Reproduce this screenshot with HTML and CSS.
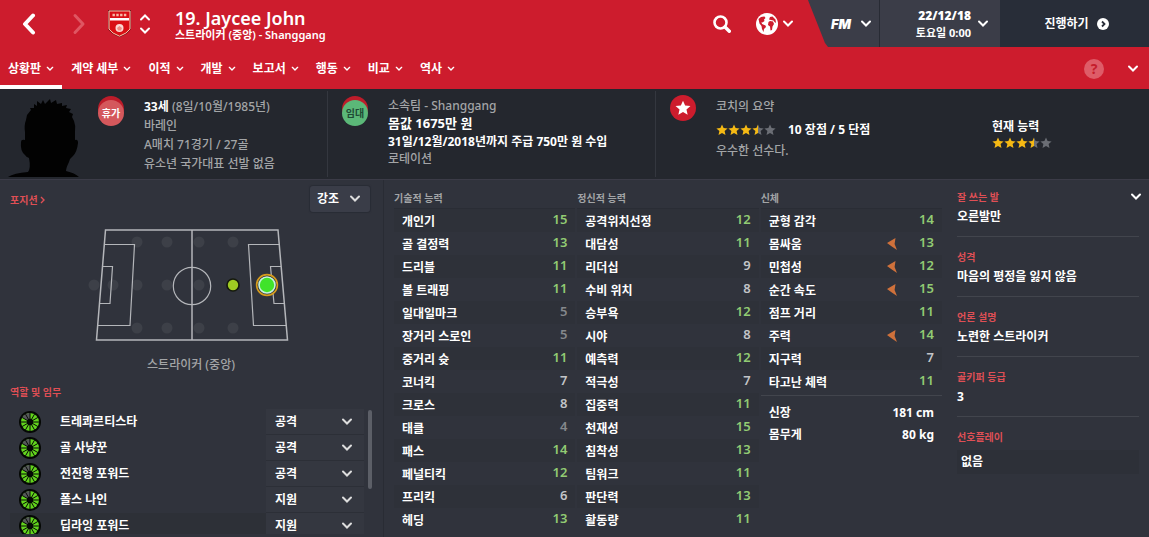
FILE: index.html
```
<!DOCTYPE html>
<html lang="ko">
<head>
    <meta charset="UTF-8">
    <meta name="viewport" content="width=device-width, initial-scale=1.0">
    <title>Jaycee John</title>
    <link rel="stylesheet" href="styles.css">
</head>
<body>
    <svg class="defs" aria-hidden="true">
        <linearGradient id="mitad"><stop offset="50%" stop-color="#f5b914"/><stop offset="50%" stop-color="#6b6e75"/></linearGradient>
        <symbol id="down" viewBox="0 0 12 8"><path d="M2 1.5 L6 5.5 L10 1.5" fill="none" stroke="currentColor" stroke-width="2" stroke-linecap="round"/></symbol>
        <symbol id="star" viewBox="0 0 12 12"><path d="M6 .5 L7.6 4.1 L11.6 4.5 L8.6 7.1 L9.5 11 L6 9 L2.5 11 L3.4 7.1 L.4 4.5 L4.4 4.1Z"/></symbol>
        <symbol id="stars" viewBox="0 0 60 12">
            <g fill="#f5b914"><use href="#star" width="12" height="12"/><use href="#star" x="12" width="12" height="12"/><use href="#star" x="24" width="12" height="12"/></g>
            <use href="#star" x="36" width="12" height="12" fill="url(#mitad)"/>
            <use href="#star" x="48" width="12" height="12" fill="#6b6e75"/>
        </symbol>
        <symbol id="wheel" viewBox="0 0 22 22">
            <circle cx="11" cy="11" r="11" fill="#050805"/>
            <circle cx="11" cy="11" r="9" fill="#62d31d"/>
            <path d="M11 11 V2 A9 9 0 0 0 3.2 6.5Z" fill="#56595a"/>
            <path d="M11 2 V20 M2 11 H20 M6.5 3.2 L15.5 18.8 M15.5 3.2 L6.5 18.8 M3.2 6.5 L18.8 15.5 M18.8 6.5 L3.2 15.5" stroke="#050805" stroke-width="1"/>
            <circle cx="11" cy="11" r="3.2" fill="#050805"/>
        </symbol>
        <symbol id="arrow" viewBox="0 0 10 12"><path d="M0 5 L8.5 0 L7.6 6 L10 12 L4.8 8.4Z" fill="#cf713b"/></symbol>
    </svg>

    <div class="screen">
        <header>
            <div class="topbar">
                <button class="icon back" aria-label="뒤로"><svg width="14" height="22" viewBox="0 0 14 22"><path d="M11 2.5 L3 11 L11 19.5" fill="none" stroke="currentColor" stroke-width="4" stroke-linecap="round" stroke-linejoin="round"/></svg></button>
                <button class="icon forward" aria-label="앞으로"><svg width="14" height="22" viewBox="0 0 14 22"><path d="M3 2.5 L11 11 L3 19.5" fill="none" stroke="currentColor" stroke-width="3" stroke-linecap="round" stroke-linejoin="round"/></svg></button>
                <svg class="crest" width="25" height="29" viewBox="0 0 25 29">
                    <path d="M1 1 H24 V20 Q21 25 12.5 28.2 Q4 25 1 20Z" fill="#7c1418"/>
                    <path d="M2 2 H23 V20 Q20 24.5 12.5 27.2 Q5 24.5 2 20Z" fill="#d90f14" stroke="#f6c5ae" stroke-width="1"/>
                    <path d="M3 9 H22 V11.5 H3Z" fill="#fff"/>
                    <path d="M5.5 6 H19.5" stroke="#f7b9a5" stroke-width="2.4" stroke-dasharray="2.4 1.4"/>
                    <circle cx="12.5" cy="19" r="4" fill="#fbd8d2"/>
                    <path d="M10 19 L12.5 17 L15 19 L14 21.5 H11Z" fill="#ef8d84"/>
                </svg>
                <div class="updown">
                    <button class="icon" aria-label="이전 선수"><svg class="flip" width="12" height="8"><use href="#down"/></svg></button>
                    <button class="icon" aria-label="다음 선수"><svg width="12" height="8"><use href="#down"/></svg></button>
                </div>
                <div class="player">
                    <h1>19. Jaycee John</h1>
                    <p>스트라이커 (중앙) - Shanggang</p>
                </div>
                <button class="icon search" aria-label="검색"><svg width="18" height="18" viewBox="0 0 18 18"><circle cx="7.5" cy="7.5" r="6" fill="none" stroke="currentColor" stroke-width="2.6"/><path d="M12 12 L16.3 16.3" stroke="currentColor" stroke-width="3.4" stroke-linecap="round"/></svg></button>
                <button class="icon world" aria-label="세계">
                    <svg width="22" height="22" viewBox="0 0 22 22"><circle cx="11" cy="11" r="11" fill="#fff"/><path d="M2.5 6 L5 4 L8.5 3.5 L9.5 5 L8 6.5 L8.5 8 L6.5 9.5 L5.5 9 L6 11 L9.5 12.5 L10 14 L8 16 L7.5 19 L6 16 L5.5 13 L3.5 10.5Z M12.5 9 L14 8 L17 8.5 L18 11 L16.5 13.5 L16 17 L14.5 17.5 L14 13.5 L12 12Z M13 6.5 L14 4 L16.5 3.5 L19.5 6.5 L20 10 L18.5 9 L17.5 7.5 L15 7Z" fill="#cd1c2d"/></svg>
                    <svg width="12" height="8"><use href="#down"/></svg>
                </button>
                <div class="tools">
                    <button class="fm"><span>FM</span><svg width="12" height="8"><use href="#down"/></svg></button>
                    <button class="date"><span><b>22/12/18</b><small>토요일 0:00</small></span><svg width="12" height="8"><use href="#down"/></svg></button>
                    <button class="continue"><span>진행하기</span><svg width="12" height="12" viewBox="0 0 12 12"><circle cx="6" cy="6" r="6" fill="#fff"/><path d="M5 3.5 L7.5 6 L5 8.5" fill="none" stroke="#282d38" stroke-width="1.8"/></svg></button>
                </div>
            </div>
            <nav>
                <button class="active">상황판<svg width="8" height="6"><use href="#down"/></svg></button>
                <button>계약 세부<svg width="8" height="6"><use href="#down"/></svg></button>
                <button>이적<svg width="8" height="6"><use href="#down"/></svg></button>
                <button>개발<svg width="8" height="6"><use href="#down"/></svg></button>
                <button>보고서<svg width="8" height="6"><use href="#down"/></svg></button>
                <button>행동<svg width="8" height="6"><use href="#down"/></svg></button>
                <button>비교<svg width="8" height="6"><use href="#down"/></svg></button>
                <button>역사<svg width="8" height="6"><use href="#down"/></svg></button>
                <button class="help">?</button>
                <button class="icon more" aria-label="더 보기"><svg width="12" height="8"><use href="#down"/></svg></button>
            </nav>
        </header>

        <section class="summary">
            <div class="card bio">
                <svg class="photo" width="80" height="82" viewBox="0 0 80 82"><path d="M8 82 Q14 78 28 77 Q31 73 29 63 Q26 62 25 60 Q20 56 21 47 Q21 44 25 45 L25 37 Q24 30 26 25 L27 20 L31 15 L30 13 L34 13 L34 9 L37 11 L37 6 L41 9 L43 5 L45 9 L50 4 L51 8 L56 5 L57 9 L62 8 L62 11 L67 10 L66 13 L71 14 L69 17 L73 19 L72 22 L74 26 Q76 31 75 37 L75 45 Q78 44 78 48 Q77 57 73 61 Q70 63 69 67 Q66 73 66 76 Q75 78 79 82Z" fill="#020202"/></svg>
                <span class="badge holiday">휴가</span>
                <div class="lines">
                    <p><b>33세</b> (8일/10월/1985년)</p>
                    <p>바레인</p>
                    <p>A매치 71경기 / 27골</p>
                    <p>유소년 국가대표 선발 없음</p>
                </div>
            </div>
            <div class="card contract">
                <span class="badge loan">임대</span>
                <div class="lines">
                    <p>소속팀 - Shanggang</p>
                    <p class="price">몸값 1675만 원</p>
                    <p><b>31일/12월/2018년까지 주급 750만 원 수입</b></p>
                    <p>로테이션</p>
                </div>
            </div>
            <div class="card coach">
                <span class="badge scout"><svg width="16" height="16"><use href="#star"/></svg></span>
                <div class="lines">
                    <p>코치의 요약</p>
                    <p class="rating"><svg width="60" height="12"><use href="#stars"/></svg><b>10 장점 / 5 단점</b></p>
                    <p>우수한 선수다.</p>
                </div>
                <div class="ability">
                    <b>현재 능력</b>
                    <svg width="60" height="12"><use href="#stars"/></svg>
                </div>
            </div>
        </section>

        <main>
            <section class="positions">
                <div class="head">
                    <a href="#">포지션 <svg width="5" height="8" viewBox="0 0 5 8"><path d="M1 1 L4 4 L1 7" fill="none" stroke="currentColor" stroke-width="1.4"/></svg></a>
                    <select class="highlight" aria-label="강조"><option>강조</option></select>
                </div>
                <svg class="pitch" width="210" height="120" viewBox="0 0 210 120">
                    <g fill="#3d4048">
                        <circle cx="51" cy="17" r="5.5"/><circle cx="81" cy="17" r="5.5"/><circle cx="113" cy="17" r="5.5"/><circle cx="147" cy="17" r="5.5"/>
                        <circle cx="8" cy="60" r="5.5"/><circle cx="27" cy="60" r="5.5"/><circle cx="51" cy="60" r="5.5"/><circle cx="81" cy="60" r="5.5"/><circle cx="113" cy="60" r="5.5"/>
                        <circle cx="51" cy="103" r="5.5"/><circle cx="81" cy="103" r="5.5"/><circle cx="113" cy="103" r="5.5"/><circle cx="147" cy="103" r="5.5"/>
                    </g>
                    <g fill="none" stroke="#b4b6ba" stroke-width="1.2">
                        <path d="M19.5 5 H192 L201.5 115 H10.5Z" stroke-width="1.5"/>
                        <path d="M106 5 V115" stroke-width="1.5"/>
                        <path d="M18 19.5 H48.5 L44 100.5 H11"/>
                        <path d="M16 41.5 H26.5 L24 78.5 H13"/>
                        <path d="M193 19.5 H162.5 L167.5 100.5 H200"/>
                        <path d="M195 41.5 H184.5 L188 78.5 H198"/>
                        <circle cx="106" cy="61" r="18.7"/>
                    </g>
                    <circle cx="147" cy="60" r="6" fill="#9fcb22" stroke="#15190d" stroke-width="1.6"/>
                    <circle cx="181" cy="60" r="10.4" fill="#30333c" stroke="#d79d1d" stroke-width="1.6"/>
                    <circle cx="181" cy="60" r="8" fill="#40e32a" stroke="#c8f3dc" stroke-width="1.6"/>
                </svg>
                <p class="caption">스트라이커 (중앙)</p>
                <h2>역할 및 임무</h2>
                <div class="roles">
                    <ul>
                        <li><svg width="22" height="22"><use href="#wheel"/></svg><label for="rol1">트레콰르티스타</label><select id="rol1"><option>공격</option></select></li>
                        <li><svg width="22" height="22"><use href="#wheel"/></svg><label for="rol2">골 사냥꾼</label><select id="rol2"><option>공격</option></select></li>
                        <li><svg width="22" height="22"><use href="#wheel"/></svg><label for="rol3">전진형 포워드</label><select id="rol3"><option>공격</option></select></li>
                        <li><svg width="22" height="22"><use href="#wheel"/></svg><label for="rol4">폴스 나인</label><select id="rol4"><option>지원</option></select></li>
                        <li class="shade"><svg width="22" height="22"><use href="#wheel"/></svg><label for="rol5">딥라잉 포워드</label><select id="rol5"><option>지원</option></select></li>
                    </ul>
                    <div class="scrollbar"></div>
                </div>
            </section>

            <section class="attributes">
                <table>
                    <thead><tr><th colspan="2">기술적 능력</th></tr></thead>
                    <tbody>
                        <tr><td>개인기</td><td class="good">15</td></tr>
                        <tr><td>골 결정력</td><td class="good">13</td></tr>
                        <tr><td>드리블</td><td class="good">11</td></tr>
                        <tr><td>볼 트래핑</td><td class="good">11</td></tr>
                        <tr><td>일대일마크</td><td class="low">5</td></tr>
                        <tr><td>장거리 스로인</td><td class="low">5</td></tr>
                        <tr><td>중거리 슛</td><td class="good">11</td></tr>
                        <tr><td>코너킥</td><td>7</td></tr>
                        <tr><td>크로스</td><td>8</td></tr>
                        <tr><td>태클</td><td class="low">4</td></tr>
                        <tr><td>패스</td><td class="good">14</td></tr>
                        <tr><td>페널티킥</td><td class="good">12</td></tr>
                        <tr><td>프리킥</td><td>6</td></tr>
                        <tr><td>헤딩</td><td class="good">13</td></tr>
                    </tbody>
                </table>
                <table>
                    <thead><tr><th colspan="2">정신적 능력</th></tr></thead>
                    <tbody>
                        <tr><td>공격위치선정</td><td class="good">12</td></tr>
                        <tr><td>대담성</td><td class="good">11</td></tr>
                        <tr><td>리더십</td><td>9</td></tr>
                        <tr><td>수비 위치</td><td>8</td></tr>
                        <tr><td>승부욕</td><td class="good">12</td></tr>
                        <tr><td>시야</td><td>8</td></tr>
                        <tr><td>예측력</td><td class="good">12</td></tr>
                        <tr><td>적극성</td><td>7</td></tr>
                        <tr><td>집중력</td><td class="good">11</td></tr>
                        <tr><td>천재성</td><td class="good">15</td></tr>
                        <tr><td>침착성</td><td class="good">13</td></tr>
                        <tr><td>팀워크</td><td class="good">11</td></tr>
                        <tr><td>판단력</td><td class="good">13</td></tr>
                        <tr><td>활동량</td><td class="good">11</td></tr>
                    </tbody>
                </table>
                <div class="physical">
                    <table>
                        <thead><tr><th colspan="2">신체</th></tr></thead>
                        <tbody>
                            <tr><td>균형 감각</td><td class="good">14</td></tr>
                            <tr><td>몸싸움</td><td class="good"><svg width="10" height="12"><use href="#arrow"/></svg>13</td></tr>
                            <tr><td>민첩성</td><td class="good"><svg width="10" height="12"><use href="#arrow"/></svg>12</td></tr>
                            <tr><td>순간 속도</td><td class="good"><svg width="10" height="12"><use href="#arrow"/></svg>15</td></tr>
                            <tr><td>점프 거리</td><td class="good">11</td></tr>
                            <tr><td>주력</td><td class="good"><svg width="10" height="12"><use href="#arrow"/></svg>14</td></tr>
                            <tr><td>지구력</td><td>7</td></tr>
                            <tr><td>타고난 체력</td><td class="good">11</td></tr>
                        </tbody>
                    </table>
                    <dl>
                        <div><dt>신장</dt><dd>181 cm</dd></div>
                        <div><dt>몸무게</dt><dd>80 kg</dd></div>
                    </dl>
                </div>
            </section>

            <aside>
                <div class="fact">
                    <div class="fact-head"><h3>잘 쓰는 발</h3><button class="icon" aria-label="열기"><svg width="12" height="8"><use href="#down"/></svg></button></div>
                    <p>오른발만</p>
                </div>
                <div class="fact"><h3>성격</h3><p>마음의 평정을 잃지 않음</p></div>
                <div class="fact"><h3>언론 설명</h3><p>노련한 스트라이커</p></div>
                <div class="fact"><h3>골키퍼 등급</h3><p>3</p></div>
                <div class="fact"><h3>선호플레이</h3><p class="box">없음</p></div>
            </aside>
        </main>
    </div>
</body>
</html>
```

FILE: styles.css
```
* {
    box-sizing: border-box;
}
body {
    margin: 0;
    background-color: #30333c;
    color: #fff;
    font-family: "Noto Sans", "Noto Sans CJK KR", sans-serif;
    font-size: 12px;
    line-height: 20px;
}
h1, h2, h3, p, ul, dl, dd {
    margin: 0;
    padding: 0;
}
svg {
    display: block;
    flex: none;
}
.defs {
    position: absolute;
    width: 0;
    height: 0;
}
button, select {
    font: inherit;
    color: inherit;
    background: none;
    border: none;
    padding: 0;
    cursor: pointer;
}
select {
    appearance: none;
    font-weight: 700;
    background: #343740 url("data:image/svg+xml,%3Csvg xmlns='http://www.w3.org/2000/svg' viewBox='0 0 12 8'%3E%3Cpath d='M2 1.5 L6 5.5 L10 1.5' fill='none' stroke='%23dddddd' stroke-width='2' stroke-linecap='round'/%3E%3C/svg%3E") no-repeat right 11px center / 12px 8px;
}
.screen {
    display: flex;
    flex-direction: column;
    height: 100vh;
    overflow: hidden;
}

/* cabecera */
header {
    background-color: #cd1c2d;
}
.topbar {
    display: flex;
    align-items: center;
    height: 47px;
    padding-left: 22px;
}
.icon {
    display: flex;
    align-items: center;
}
.forward {
    margin-left: 36px;
    color: #df5662;
}
.crest {
    margin-left: 21px;
}
.updown {
    display: flex;
    flex-direction: column;
    gap: 6px;
    margin: 0 24px 0 7px;
}
.flip {
    transform: scaleY(-1);
}
.player {
    flex: 1;
    padding-top: 1px;
}
.player h1 {
    font-size: 18px;
    line-height: 22px;
    font-weight: 600;
}
.player p {
    font-size: 11px;
    line-height: 12px;
    font-weight: 600;
}
.world {
    gap: 4px;
    margin: 0 14px 0 25px;
}
.tools {
    display: flex;
    align-self: stretch;
    background-color: #3b3d48;
    clip-path: polygon(0 0, 100% 0, 100% 100%, 20px 100%, 17px 43px);
}
.tools button {
    display: flex;
    align-items: center;
    font-weight: 700;
}
.fm {
    gap: 9px;
    padding: 0 7px 0 23px;
    border-right: 1px solid #282b34;
}
.fm span {
    font-family: Inter, sans-serif;
    font-size: 13px;
    font-weight: 900;
    font-style: italic;
}
.date {
    justify-content: flex-end;
    gap: 6px;
    width: 120px;
    padding-right: 11px;
    text-align: right;
}
.date b, .date small {
    display: block;
    font-size: 12px;
    line-height: 17px;
}
.date small {
    font-size: 11px;
}
.tools .continue {
    justify-content: center;
    gap: 8px;
    width: 149px;
    padding-left: 4px;
    background-color: #282d38;
}
nav {
    display: flex;
    gap: 1px;
    height: 42px;
    padding-right: 10px;
}
nav button {
    display: flex;
    align-items: center;
    gap: 5px;
    padding: 6px 8px 0;
    font-weight: 700;
    border-bottom: 4px solid transparent;
}
nav .active {
    border-bottom-color: #fff;
}
nav .help {
    align-self: center;
    justify-content: center;
    width: 20px;
    height: 20px;
    margin: 2px 22px 0 auto;
    padding: 0;
    border: none;
    border-radius: 50%;
    background-color: #de5c68;
    color: #c51c2c;
    font-size: 14px;
}
nav .more {
    padding: 6px 0 0;
}

/* resumen */
.summary {
    display: grid;
    grid-template-columns: 328fr 328fr 493fr;
    padding: 2px 0;
    background-color: #24272e;
    border-bottom: 1px solid #3b3b47;
    color: #a3a5a7;
}
.summary b {
    color: #fff;
}
.card {
    display: flex;
    align-items: flex-start;
    height: 86px;
    padding-left: 14px;
}
.bio {
    padding-left: 0;
}
.bio, .contract {
    border-right: 1px solid #34373f;
}
.photo {
    align-self: flex-end;
    margin-right: 18px;
}
.badge {
    display: flex;
    align-items: center;
    justify-content: center;
    flex: none;
    width: 26px;
    height: 26px;
    margin: 9px 20px 0 0;
    border-radius: 50%;
    font-size: 10px;
    font-weight: 700;
}
.holiday {
    background-color: #d4585c;
    color: #fff;
    box-shadow: 0 -4px #bd1c2a;
}
.loan {
    background-color: #5bb878;
    color: #1f4a35;
    box-shadow: 0 -4px #bd1c2a;
}
.scout {
    margin-top: 4px;
    background-color: #cd1c2d;
    fill: #fff;
}
.lines {
    padding-top: 6px;
    font-weight: 500;
    line-height: 19px;
}
.contract .lines {
    line-height: 17px;
}
.lines .price {
    color: #fff;
    font-size: 13px;
    font-weight: 700;
    line-height: 19px;
}
.coach .lines {
    flex: 1;
    line-height: 20px;
}
.rating {
    display: flex;
    align-items: center;
    gap: 12px;
    padding: 3px 0 1px;
}
.ability {
    width: 157px;
    padding-top: 26px;
}

/* contenido */
main {
    display: grid;
    grid-template-columns: 384fr 565fr 200fr;
    flex: 1;
    min-height: 0;
}
.positions {
    display: flex;
    flex-direction: column;
    min-height: 0;
    padding: 6px 11px 3px 10px;
    border-right: 1px solid #292c34;
}
.head {
    display: flex;
    justify-content: space-between;
    align-items: center;
    padding-right: 2px;
}
.head a, h2, h3 {
    color: #df4f55;
    font-size: 10px;
    font-weight: 700;
    text-decoration: none;
}
.head a {
    display: flex;
    align-items: center;
    gap: 2px;
    padding-top: 2px;
}
.highlight {
    width: 60px;
    height: 26px;
    padding-left: 7px;
    border-radius: 3px;
    background-color: #3a3d48;
    background-position: right 9px center;
    box-shadow: 0 0 1px 1px #292c35;
}
.pitch {
    align-self: center;
    margin-top: 13px;
}
.caption {
    margin-top: 10px;
    text-align: center;
    color: #a3a5a7;
    font-weight: 500;
}
h2 {
    margin-top: 7px;
    line-height: 20px;
}
.roles {
    display: flex;
    gap: 4px;
    flex: 1;
    min-height: 0;
    margin-top: 7px;
    overflow: hidden;
}
.roles ul {
    flex: 1;
    list-style: none;
}
.roles li {
    display: flex;
    align-items: center;
    height: 26px;
    padding-left: 9px;
}
.roles .shade {
    background-color: #2d3037;
}
.roles label {
    flex: 1;
    padding-left: 19px;
    font-weight: 700;
}
.roles select {
    width: 98px;
    height: 26px;
    padding-left: 9px;
    border-bottom: 1px solid #2c2f37;
}
.scrollbar {
    width: 4px;
    height: 79px;
    margin-top: 1px;
    border-radius: 2px;
    background-color: #5c5f67;
}
.attributes {
    display: grid;
    grid-template-columns: repeat(3, 1fr);
    align-items: start;
    gap: 2px;
    padding: 8px 7px 0 10px;
}
table {
    width: 100%;
    border-collapse: collapse;
}
th {
    height: 20px;
    padding: 0;
    text-align: left;
    color: #a3a5a7;
    font-size: 10px;
    font-weight: 700;
    border-bottom: 1px solid #2a2d35;
}
td {
    height: 23px;
    padding: 2px 8px 0;
    font-weight: 700;
}
td:last-child {
    padding-top: 0;
    padding-bottom: 3px;
    text-align: right;
    color: #c3c5c8;
    font-size: 13px;
    font-weight: 600;
}
td svg {
    display: inline-block;
    margin-right: 22px;
    vertical-align: -3px;
}
td.good:last-child {
    color: #92cb73;
}
td.low:last-child {
    color: #85888c;
}
tbody tr:nth-child(odd) {
    background-color: #2e3139;
}
dl {
    margin-top: 2px;
    padding: 6px 8px;
    border-top: 1px solid #42454d;
    font-weight: 700;
}
dl div {
    display: flex;
    justify-content: space-between;
    line-height: 22px;
}
aside {
    padding: 7px 10px 0 8px;
}
.fact {
    padding-bottom: 9px;
    margin-bottom: 10px;
    border-bottom: 1px solid #42454d;
}
.fact:last-child {
    border: none;
}
.fact-head {
    display: flex;
    justify-content: space-between;
    margin-right: -3px;
}
.fact p {
    font-weight: 700;
}
.fact .box {
    padding: 2px 4px;
    margin-top: 3px;
    background-color: #2d3038;
}
```
